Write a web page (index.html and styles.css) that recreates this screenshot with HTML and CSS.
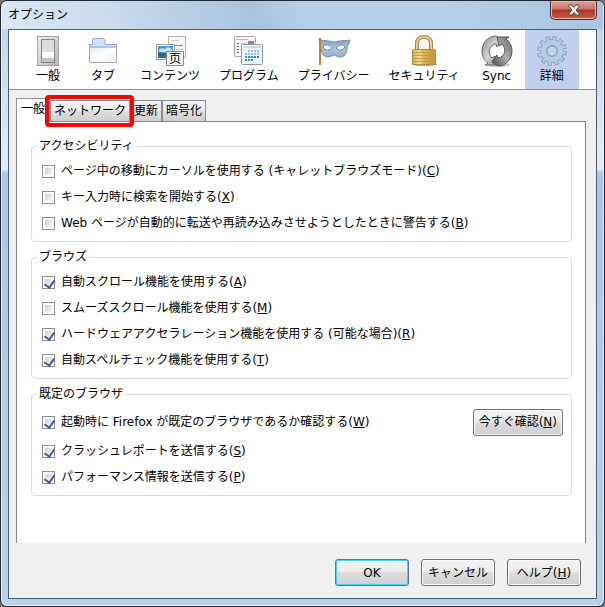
FILE: index.html
```html
<!DOCTYPE html>
<html lang="ja">
<head>
  <meta charset="UTF-8">
  <title>オプション</title>
  <link rel="stylesheet" href="styles.css">
</head>
<body>

  <div class="window">
    <header class="titlebar">
      <h1>オプション</h1>
      <button type="button" class="close" aria-label="閉じる">
        <svg width="14" height="12" viewBox="0 0 14 12">
          <path d="M2 1h3l2 2.500L9 1h3v1.500L9 6l3 3.500V11H9L7 8.500 5 11H2V9.500L5 6 2 2.500z" fill="#fff" stroke="#5b3a3a"/>
        </svg>
      </button>
    </header>

    <div class="client">
      <nav class="toolbar">
        <button type="button" class="category">
          <svg width="32" height="32" viewBox="0 0 32 32">
            <defs>
              <linearGradient id="plate" x1="0" y1="0" x2="1" y2="1">
                <stop offset="0" stop-color="#f2f2f2"/>
                <stop offset="1" stop-color="#b5b5b5"/>
              </linearGradient>
            </defs>
            <rect x="5.500" y="1.500" width="21" height="29" fill="url(#plate)" stroke="#a5a5a5"/>
            <rect x="9.500" y="4.500" width="13" height="23" fill="#dedede" stroke="#858585"/>
            <path d="M10 17h12v6H10z" fill="#fff"/>
            <path d="M10 23h12v4H10z" fill="#c4c4c4"/>
          </svg>
          <span>一般</span>
        </button>
        <button type="button" class="category">
          <svg width="32" height="32" viewBox="0 0 32 32">
            <defs>
              <linearGradient id="page" x1="0" y1="0" x2="1" y2="1">
                <stop offset="0" stop-color="#e8e8e8"/>
                <stop offset="0.500" stop-color="#fff"/>
                <stop offset="1" stop-color="#ededed"/>
              </linearGradient>
            </defs>
            <path d="M2.500 13V9.500h3V5l1-1.500h10L18 5v4.500h11.500V13z" fill="#cfe0f8" stroke="#9aa8bf"/>
            <path d="M3 11h26v2H3z" fill="#a9c3f3"/>
            <path d="M2.500 12v15.500h27V12" fill="none" stroke="#aaa"/>
            <path d="M3 13h26v14H3z" fill="url(#page)"/>
          </svg>
          <span>タブ</span>
        </button>
        <button type="button" class="category">
          <svg width="32" height="32" viewBox="0 0 32 32">
            <path d="M14.500 1.500h17v21h-17z" fill="#f5f7f9" stroke="#b0b5ba"/>
            <path d="M17 5.500h8M22 14.500h7M22 18.500h7" stroke="#c5cbd2"/>
            <path d="M17 10.500h12" stroke="#5b93cc"/>
            <path d="M2.500 9.500h18v15h-18z" fill="#fff" stroke="#999"/>
            <path d="M4 11h15v12H4z" fill="#4f96df"/>
            <path d="M5 15l3-2 3 1 3-2 4 2v3H5z" fill="#c7e4f9"/>
            <path d="M4 17l5 1 10-1v6H4z" fill="#2c6f9e"/>
            <path d="M4 17l5 2 4 1-9 1z" fill="#317343"/>
            <path d="M12.500 16.500h17v14h-17z" fill="#f6f6f6" stroke="#888"/>
            <text x="15" y="28" class="glyph">页</text>
          </svg>
          <span>コンテンツ</span>
        </button>
        <button type="button" class="category">
          <svg width="32" height="32" viewBox="0 0 32 32">
            <rect x="1.500" y="1.500" width="21" height="20" rx="1" fill="#f4f4f4" stroke="#aaa"/>
            <path d="M3 4.500h12" stroke="#bbb"/>
            <path d="M15 6h6v3h-6z" fill="#888"/>
            <path d="M4 8.500h2M4 11.500h2M4 14.500h2M4 17.500h2" stroke="#777"/>
            <path d="M7 8.500h7M7 11.500h7M7 14.500h7" stroke="#ccc"/>
            <rect x="8.500" y="9.500" width="21" height="20" rx="1" fill="#f0f6fb" stroke="#8f9ba5"/>
            <path d="M10 12h18" stroke="#ccdcea" stroke-width="2"/>
            <path d="M15 16h12M12 19h15" stroke="#8ec0e9" stroke-width="2" stroke-dasharray="2 1"/>
            <path d="M12 22h15M12 25h9" stroke="#3585c9" stroke-width="2" stroke-dasharray="2 1"/>
          </svg>
          <span>プログラム</span>
        </button>
        <button type="button" class="category">
          <svg width="34" height="32" viewBox="0 0 34 32">
            <defs>
              <linearGradient id="mask" x1="0" y1="0" x2="0" y2="1">
                <stop offset="0" stop-color="#7d9dbd"/>
                <stop offset="0.500" stop-color="#a9c4e0"/>
                <stop offset="1" stop-color="#8fb0d0"/>
              </linearGradient>
            </defs>
            <path d="M2 4c3 2 6 1 9 2 3 0 4 1 6 1s3-1 6-1c4-1 6 0 10-1 0 3-3 5-3 8 0 6-3 9-7 9-3 0-4-2-6-2s-3 2-6 2c-4 0-7-3-7-9 0-3-2-5-2-9z" fill="url(#mask)" stroke="#7792b0"/>
            <path d="M6 12c2-3 6-3 9 1-2 3-7 3-9-1zM28 12c-2-3-6-3-9 1 2 3 7 3 9-1z" fill="#fff" stroke="#6483a3"/>
            <path d="M3 3v27" stroke="#8e5c14" stroke-width="2"/>
            <path d="M3 3v27" stroke="#e7b04b"/>
          </svg>
          <span>プライバシー</span>
        </button>
        <button type="button" class="category">
          <svg width="32" height="32" viewBox="0 0 32 32">
            <defs>
              <linearGradient id="brass" x1="0" y1="0" x2="1" y2="0">
                <stop offset="0" stop-color="#d6ad52"/>
                <stop offset="0.300" stop-color="#f0da94"/>
                <stop offset="0.500" stop-color="#d9b45c"/>
                <stop offset="1" stop-color="#c09236"/>
              </linearGradient>
            </defs>
            <ellipse cx="16" cy="29" rx="13" ry="2" fill="#aaa"/>
            <path d="M9 16V8c0-8 14-8 14 0v8" fill="none" stroke="#a88542" stroke-width="4"/>
            <path d="M9 16V8c0-8 14-8 14 0v8" fill="none" stroke="#e6cf8d" stroke-width="2"/>
            <rect x="4.500" y="14.500" width="23" height="15" rx="1" fill="url(#brass)" stroke="#b58a35"/>
            <path d="M5 17.500h22M5 20.500h22M5 23.500h22M5 26.500h22" stroke="#c39b48"/>
          </svg>
          <span>セキュリティ</span>
        </button>
        <button type="button" class="category">
          <svg width="32" height="32" viewBox="0 0 32 32">
            <defs>
              <linearGradient id="steel" x1="0" y1="0" x2="1" y2="1">
                <stop offset="0" stop-color="#858585"/>
                <stop offset="0.500" stop-color="#d8d8d8"/>
                <stop offset="1" stop-color="#6a6a6a"/>
              </linearGradient>
              <linearGradient id="iron" x1="1" y1="0" x2="0" y2="1">
                <stop offset="0" stop-color="#4a4a4a"/>
                <stop offset="0.500" stop-color="#b0b0b0"/>
                <stop offset="1" stop-color="#666"/>
              </linearGradient>
            </defs>
            <ellipse cx="17" cy="30" rx="12" ry="2" fill="#ccc"/>
            <path d="M15 1C7 1 1 8 1 16c0 5 2 9 6 12l-3 2h12l-2-9-3 2c-5-5-3-13 4-14l1 3 5-7-6-4z" fill="url(#steel)" stroke="#666"/>
            <path d="M15 1C7 1 1 8 1 16c0 5 2 9 6 12l-3 2h12l-2-9-3 2c-5-5-3-13 4-14l1 3 5-7-6-4z" fill="url(#iron)" stroke="#555" transform="rotate(180 16 16)"/>
          </svg>
          <span>Sync</span>
        </button>
        <button type="button" class="category selected">
          <svg width="32" height="32" viewBox="0 0 32 32">
            <circle cx="16" cy="16" r="12.500" fill="none" stroke="#86a3c0" stroke-width="5" stroke-dasharray="4 2.545"/>
            <circle cx="16" cy="16" r="8.500" fill="none" stroke="#86a3c0" stroke-width="7"/>
            <circle cx="16" cy="16" r="12" fill="none" stroke="#b4cde2" stroke-width="4" stroke-dasharray="2.400 3.883" stroke-dashoffset="-0.700"/>
            <circle cx="16" cy="16" r="8.500" fill="none" stroke="#b4cde2" stroke-width="5"/>
            <circle cx="16" cy="16" r="5" fill="#c1d0ee" stroke="#86a3c0"/>
          </svg>
          <span>詳細</span>
        </button>
      </nav>

      <main class="content">
        <div class="tabs" role="tablist">
          <button type="button" role="tab" class="tab active" aria-selected="true">一般</button>
          <button type="button" role="tab" class="tab marked">ネットワーク</button>
          <button type="button" role="tab" class="tab">更新</button>
          <button type="button" role="tab" class="tab">暗号化</button>
        </div>

        <form class="panel" id="options">
          <fieldset>
            <legend>アクセシビリティ</legend>
            <label><input type="checkbox"><span>ページ中の移動にカーソルを使用する (キャレットブラウズモード)(<u>C</u>)</span></label>
            <label><input type="checkbox"><span>キー入力時に検索を開始する(<u>X</u>)</span></label>
            <label><input type="checkbox"><span>Web ページが自動的に転送や再読み込みさせようとしたときに警告する(<u>B</u>)</span></label>
          </fieldset>

          <fieldset>
            <legend>ブラウズ</legend>
            <label><input type="checkbox" checked><span>自動スクロール機能を使用する(<u>A</u>)</span></label>
            <label><input type="checkbox"><span>スムーズスクロール機能を使用する(<u>M</u>)</span></label>
            <label><input type="checkbox" checked><span>ハードウェアアクセラレーション機能を使用する (可能な場合)(<u>R</u>)</span></label>
            <label><input type="checkbox" checked><span>自動スペルチェック機能を使用する(<u>T</u>)</span></label>
          </fieldset>

          <fieldset>
            <legend>既定のブラウザ</legend>
            <div class="row">
              <label><input type="checkbox" checked><span>起動時に Firefox が既定のブラウザであるか確認する(<u>W</u>)</span></label>
              <button type="button" class="btn">今すぐ確認(<u>N</u>)</button>
            </div>
            <label><input type="checkbox" checked><span>クラッシュレポートを送信する(<u>S</u>)</span></label>
            <label><input type="checkbox" checked><span>パフォーマンス情報を送信する(<u>P</u>)</span></label>
          </fieldset>
        </form>
      </main>

      <footer class="actions">
        <button type="submit" form="options" class="btn default">OK</button>
        <button type="button" class="btn">キャンセル</button>
        <button type="button" class="btn">ヘルプ(<u>H</u>)</button>
      </footer>
    </div>
  </div>

</body>
</html>
```
FILE: styles.css
```css
* {
  box-sizing: border-box;
}

body {
  margin: 0;
  background-color: #777;
  color: #000;
  font-family: "DejaVu Sans", "Noto Sans CJK JP", sans-serif;
  font-size: 12px;
  line-height: 18px;
}

button {
  font: inherit;
  color: inherit;
  white-space: nowrap;
}

.window {
  display: flex;
  flex-direction: column;
  min-height: 100vh;
  padding: 0 7px 7px;
  border: 1px solid #22262e;
  border-radius: 7px;
  background: linear-gradient(#b9d1ea 0, #d5e4f3 110px, #e3edf8 168px, #abc7e5 172px, #b9d1ea 100%);
  box-shadow: inset 0 0 0 1px #e6f1fb;
}

.titlebar {
  display: flex;
  justify-content: space-between;
  align-items: flex-start;
  height: 28px;
  margin: 0 -6px;
  padding: 0 6px;
  border-radius: 6px 6px 0 0;
  background: linear-gradient(65deg, #dce8f4 0, #c8daec 20%, #a9c3df 42%, #b5cfeb 50%, #b5cfeb 75%, #a9c4df 100%);
}

.titlebar h1 {
  margin: 5px 0 0;
  font-size: 12px;
  font-weight: normal;
}

.close {
  display: flex;
  align-items: center;
  justify-content: center;
  width: 47px;
  height: 19px;
  padding: 0;
  border: 1px solid #542c2c;
  border-top: none;
  border-radius: 0 0 5px 5px;
  background: linear-gradient(#dfa39a, #ca7466 45%, #ad3424 50%, #c55f43);
  box-shadow: inset 0 0 0 1px #e8b4a9;
}

.client {
  flex: 1;
  display: flex;
  flex-direction: column;
  border: 1px solid #4d5d70;
  background-color: #f0f0f0;
}

.toolbar {
  display: flex;
  gap: 1px;
  height: 60px;
  padding-left: 12px;
  border-bottom: 1px solid #8e8f8f;
  background-color: #fff;
}

.category {
  display: flex;
  flex-direction: column;
  align-items: center;
  min-width: 54px;
  padding: 5px 9px 0;
  border: none;
  background: none;
}

.category svg {
  flex: none;
}

.category.selected {
  background-color: #c1d0ee;
}

.glyph {
  font-family: "Noto Sans CJK SC", sans-serif;
  font-size: 12px;
}

.content {
  flex: 1;
  display: flex;
  flex-direction: column;
  padding: 8px 10px 0 7px;
}

.tabs {
  display: flex;
  align-items: flex-end;
}

.tab {
  height: 21px;
  padding: 0 3px;
  border: 1px solid #8c8f96;
  border-bottom: none;
  background: linear-gradient(#f2f2f2, #ebebeb 50%, #ddd 50%, #cfcfcf);
}

.tab.active {
  height: 24px;
  margin-bottom: -1px;
  padding: 0 4px 3px;
  background: #fff;
  z-index: 1;
}

.tab.marked {
  position: relative;
}

/* red frame drawn over the tab */
.tab.marked::after {
  content: "";
  position: absolute;
  inset: -6px -5px -6px -6px;
  border: 4px solid #f00;
  border-radius: 4px;
  z-index: 2;
}

.panel {
  flex: 1;
  padding: 15px 13px 0 14px;
  border: 1px solid #828790;
  border-bottom: none;
  background-color: #fff;
}

fieldset {
  min-width: 0;
  margin: 0 0 6px;
  padding: 3px 8px 5px 10px;
  border: 1px solid #d5dfe5;
  border-radius: 4px;
}

legend {
  margin-left: -5px;
  padding: 0 2px;
}

fieldset label {
  display: flex;
  align-items: center;
  gap: 6px;
  min-height: 26px;
}

input[type="checkbox"] {
  appearance: none;
  display: grid;
  flex: none;
  width: 13px;
  height: 13px;
  margin: 0;
  padding: 2px;
  border: 1px solid #8e8f8f;
  background: linear-gradient(135deg, #ccd0d5, #f6f6f6) content-box #f4f4f4;
}

input[type="checkbox"]:checked::before {
  content: "";
  width: 5px;
  height: 8px;
  margin: -1px 0 0 1px;
  border: solid #41599c;
  border-width: 0 2px 2px 0;
  transform: rotate(35deg);
}

.row {
  display: flex;
  align-items: center;
  justify-content: space-between;
  min-height: 32px;
}

.btn {
  min-width: 74px;
  height: 27px;
  padding: 0 5px;
  border: 1px solid #707070;
  border-radius: 3px;
  background: linear-gradient(#f2f2f2, #ebebeb 50%, #ddd 50%, #cfcfcf);
  box-shadow: inset 0 0 0 1px #fafafa;
}

.btn.default {
  border-color: #3c7fb1;
  box-shadow: inset 0 0 0 1px #46d0f5;
}

.actions {
  display: flex;
  justify-content: flex-end;
  gap: 12px;
  padding: 16px 15px 12px;
}
```
